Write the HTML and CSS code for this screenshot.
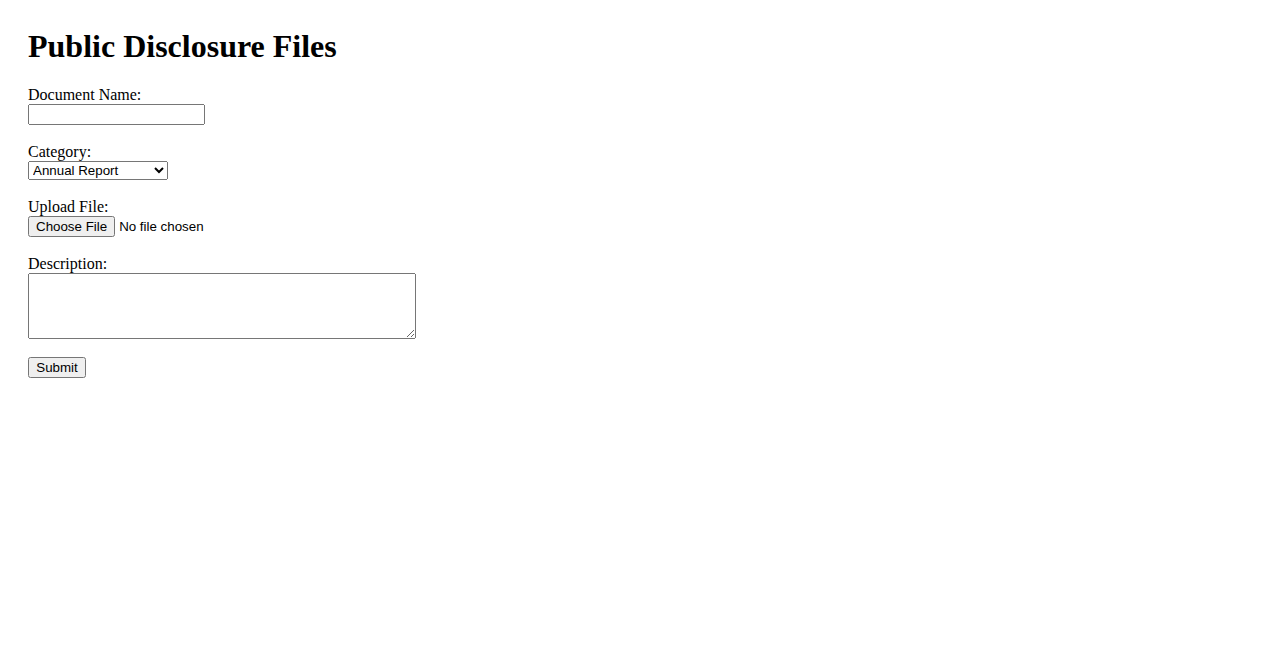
FILE: index.html
```html
<!DOCTYPE html>
<html lang="en">
<head>
<meta charset="utf-8">
<title>Public Disclosure Files</title>
<link rel="stylesheet" href="styles.css">
</head>
<body>
<h1 class="title">Public Disclosure Files</h1>
<form class="upload-form">
<label for="docname">Document Name:</label><br>
<input type="text" id="docname" name="docname" class="field-text"><br><br>
<label for="category">Category:</label><br>
<select id="category" name="category" class="field-select">
<option>Annual Report</option>
<option>Financial Statement</option>
<option>Audit Report</option>
</select><br><br>
<label for="file">Upload File:</label><br>
<input type="file" id="file" name="file" class="field-file"><br><br>
<label for="desc">Description:</label><br>
<textarea id="desc" name="desc" rows="4" cols="50" class="field-area"></textarea><br><br>
<input type="submit" value="Submit" class="btn-submit">
</form>
</body>
</html>
```
FILE: styles.css
```css
body {
  margin: 8px;
  padding: 20px;
  font-family: "Liberation Serif", "Times New Roman", serif;
  font-size: 16px;
  color: #000;
  background: #fff;
}
.title {
  margin-top: 0;
}
input, select, textarea, button {
  font-family: "Liberation Sans", Arial, sans-serif;
  font-size: 13.333px;
}
.field-text {
  box-sizing: border-box;
  width: 177px;
  height: 21px;
}
.field-area {
  box-sizing: border-box;
  width: 388px;
  height: 66px;
  vertical-align: bottom;
  font-family: "Liberation Mono", monospace;
}
.btn-submit {
  box-sizing: border-box;
  height: 21px;
  width: 58px;
  padding: 1px 6px;
}
```
